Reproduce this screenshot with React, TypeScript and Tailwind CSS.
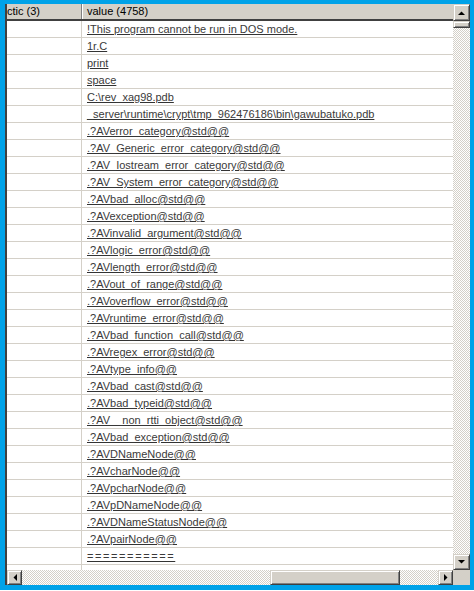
import React from "react";

const values = [
  "!This program cannot be run in DOS mode.",
  "1r.C",
  "print",
  "space",
  "C:\\rev_xag98.pdb",
  "_server\\runtime\\crypt\\tmp_962476186\\bin\\gawubatuko.pdb",
  ".?AVerror_category@std@@",
  ".?AV_Generic_error_category@std@@",
  ".?AV_Iostream_error_category@std@@",
  ".?AV_System_error_category@std@@",
  ".?AVbad_alloc@std@@",
  ".?AVexception@std@@",
  ".?AVinvalid_argument@std@@",
  ".?AVlogic_error@std@@",
  ".?AVlength_error@std@@",
  ".?AVout_of_range@std@@",
  ".?AVoverflow_error@std@@",
  ".?AVruntime_error@std@@",
  ".?AVbad_function_call@std@@",
  ".?AVregex_error@std@@",
  ".?AVtype_info@@",
  ".?AVbad_cast@std@@",
  ".?AVbad_typeid@std@@",
  ".?AV__non_rtti_object@std@@",
  ".?AVbad_exception@std@@",
  ".?AVDNameNode@@",
  ".?AVcharNode@@",
  ".?AVpcharNode@@",
  ".?AVpDNameNode@@",
  ".?AVDNameStatusNode@@",
  ".?AVpairNode@@",
  "===========",
  "",
];

const bevel =
  "bg-[#d4d0c8] border border-t-[#d4d0c8] border-l-[#d4d0c8] border-r-[#404040] border-b-[#404040] shadow-[inset_1px_1px_#fff,inset_-1px_-1px_#808080]";

const checker =
  "bg-[repeating-conic-gradient(#d4d0c8_0%_25%,#ffffff_0%_50%)] bg-size-[2px_2px]";

type Dir = "up" | "down" | "left" | "right";

const Arrow: React.FC<{ dir: Dir }> = ({ dir }) => {
  const pts: Record<Dir, string> = {
    up: "0,4 7,4 3.5,0.5",
    down: "0,0 7,0 3.5,3.5",
    left: "4,0 4,7 0.5,3.5",
    right: "0,0 0,7 3.5,3.5",
  };
  const vertical = dir === "up" || dir === "down";
  return (
    <svg
      width={vertical ? 7 : 4}
      height={vertical ? 4 : 7}
      viewBox={vertical ? "0 0 7 4" : "0 0 4 7"}
    >
      <polygon points={pts[dir]} fill="#000" />
    </svg>
  );
};

const ScrollButton: React.FC<{ dir: Dir; className?: string }> = ({
  dir,
  className = "",
}) => (
  <div className={`${bevel} flex items-center justify-center ${className}`}>
    <Arrow dir={dir} />
  </div>
);

export default function App() {
  return (
    <div className="w-[474px] h-[591px] flex flex-col bg-[#00a2e8] overflow-hidden font-['Liberation_Sans',Arial,sans-serif] text-[11px]">
      <div className="pt-[4px] pl-[5px] pr-[4px] h-[590px]">
        <div className="flex flex-col h-[581px] border-l-2 border-l-[#404040] bg-white">
          <div className="flex h-[566px]">
            {/* list */}
            <div className="flex-1 flex flex-col overflow-hidden">
              <div className="flex h-[17px] shrink-0 bg-[#d4d0c8] border-b-2 border-b-[#404040] text-black leading-[15px]">
                <div className="w-[75px] shrink-0 border-r border-r-[#808080] overflow-hidden whitespace-nowrap">
                  ctic (3)
                </div>
                <div className="flex-1 border-l border-l-white pl-[4px] whitespace-nowrap">
                  value (4758)
                </div>
              </div>
              <div className="flex-1 overflow-hidden">
                {values.map((v, i) => (
                  <div
                    key={i}
                    className="flex h-[17px] border-b border-b-[#d4d0c8] leading-[16px]"
                  >
                    <div className="w-[75px] shrink-0 border-r border-r-[#d4d0c8]" />
                    <div
                      className={`flex-1 pl-[5px] whitespace-nowrap overflow-hidden text-[#3a3a3a] underline decoration-[#333] ${
                        v.startsWith("===") ? "tracking-[1.6px]" : ""
                      }`}
                    >
                      {v}
                    </div>
                  </div>
                ))}
              </div>
            </div>
            {/* vertical scrollbar */}
            <div className={`w-[17px] shrink-0 flex flex-col ${checker}`}>
              <ScrollButton dir="up" className="h-[17px]" />
              <div className={`${bevel} h-[7px]`} />
              <div className="flex-1" />
              <ScrollButton dir="down" className="h-[16px]" />
            </div>
          </div>
          {/* horizontal scrollbar */}
          <div className="flex h-[15px]">
            <div className={`flex-1 flex ${checker}`}>
              <ScrollButton dir="left" className="w-[15px]" />
              <div className="w-[248px]" />
              <div className={`${bevel} w-[130px]`} />
              <div className="flex-1" />
              <ScrollButton dir="right" className="w-[15px]" />
            </div>
            <div className="w-[17px] bg-[#d4d0c8]" />
          </div>
        </div>
      </div>
      <div className="h-[1px] bg-white" />
    </div>
  );
}
